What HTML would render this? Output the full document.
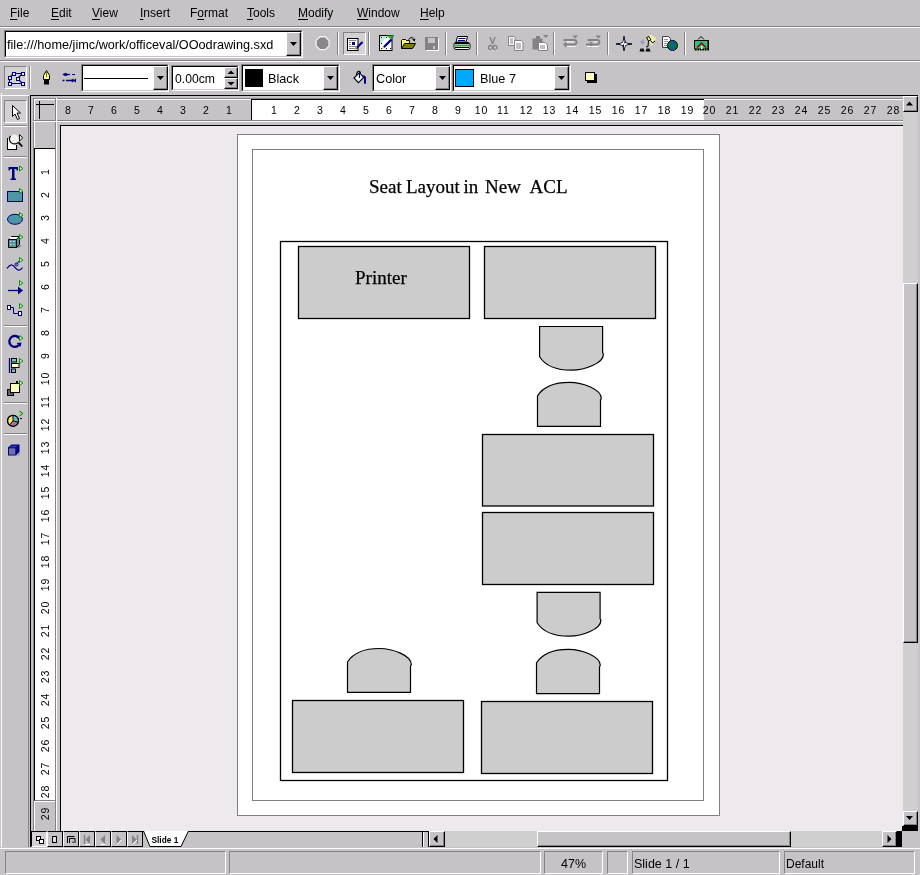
<!DOCTYPE html><html><head><meta charset="utf-8"><style>
*{margin:0;padding:0;box-sizing:border-box}
html,body{width:920px;height:875px;overflow:hidden;background:#c6c3c6;font-family:"Liberation Sans",sans-serif;font-size:12px;color:#000}
div,span,svg{position:absolute}
span{white-space:nowrap;line-height:1;filter:grayscale(1)}
u{text-decoration:underline;text-underline-offset:2px;text-decoration-thickness:1px}
.rl{font-size:11px;width:30px;text-align:center}
</style></head><body><span style="left:10px;top:7px;font-size:12px;"><u>F</u>ile</span>
<span style="left:51px;top:7px;font-size:12px;"><u>E</u>dit</span>
<span style="left:92px;top:7px;font-size:12px;"><u>V</u>iew</span>
<span style="left:140px;top:7px;font-size:12px;"><u>I</u>nsert</span>
<span style="left:190px;top:7px;font-size:12px;">F<u>o</u>rmat</span>
<span style="left:247px;top:7px;font-size:12px;"><u>T</u>ools</span>
<span style="left:298px;top:7px;font-size:12px;"><u>M</u>odify</span>
<span style="left:357px;top:7px;font-size:12px;"><u>W</u>indow</span>
<span style="left:420px;top:7px;font-size:12px;"><u>H</u>elp</span>
<div style="left:0px;top:26px;width:920px;height:1px;background:#848284"></div>
<div style="left:0px;top:27px;width:920px;height:1px;background:#fff"></div>
<div style="left:0px;top:60px;width:920px;height:1px;background:#848284"></div>
<div style="left:0px;top:61px;width:920px;height:1px;background:#fff"></div>
<div style="left:4px;top:30px;width:299px;height:28px;background:#fff;border-top:1px solid #848284;border-left:1px solid #848284;border-right:1px solid #fff;border-bottom:1px solid #fff"></div>
<div style="left:5px;top:31px;width:297px;height:26px;border-top:1px solid #000;border-left:1px solid #000;border-right:1px solid #c6c3c6;border-bottom:1px solid #c6c3c6"></div>
<span style="left:7px;top:39px;font-size:12.7px">file:///home/jimc/work/officeval/OOodrawing.sxd</span>
<div style="left:286px;top:32px;width:15px;height:24px;background:#c6c3c6;border-top:1px solid #fff;border-left:1px solid #fff;border-right:1px solid #000;border-bottom:1px solid #000"></div>
<div style="left:287px;top:33px;width:13px;height:22px;border-right:1px solid #848284;border-bottom:1px solid #848284"></div>
<svg style="left:290px;top:42px" width="7" height="4"><path d="M0 0H7L3.5 4Z" fill="#000"/></svg>
<div style="left:337px;top:32px;width:1px;height:23px;background:#848284"></div>
<div style="left:338px;top:32px;width:1px;height:23px;background:#fff"></div>
<div style="left:343px;top:32px;width:23px;height:23px;background:#d4d1d4;border-top:1px solid #848284;border-left:1px solid #848284;border-right:1px solid #fff;border-bottom:1px solid #fff"></div>
<div style="left:368px;top:32px;width:1px;height:23px;background:#848284"></div>
<div style="left:369px;top:32px;width:1px;height:23px;background:#fff"></div>
<div style="left:445px;top:32px;width:1px;height:23px;background:#848284"></div>
<div style="left:446px;top:32px;width:1px;height:23px;background:#fff"></div>
<div style="left:476px;top:32px;width:1px;height:23px;background:#848284"></div>
<div style="left:477px;top:32px;width:1px;height:23px;background:#fff"></div>
<div style="left:553px;top:32px;width:1px;height:23px;background:#848284"></div>
<div style="left:554px;top:32px;width:1px;height:23px;background:#fff"></div>
<div style="left:607px;top:32px;width:1px;height:23px;background:#848284"></div>
<div style="left:608px;top:32px;width:1px;height:23px;background:#fff"></div>
<div style="left:684px;top:32px;width:1px;height:23px;background:#848284"></div>
<div style="left:685px;top:32px;width:1px;height:23px;background:#fff"></div>
<div style="left:4px;top:66px;width:23px;height:23px;background:#d4d1d4;border-top:1px solid #848284;border-left:1px solid #848284;border-right:1px solid #fff;border-bottom:1px solid #fff"></div>
<div style="left:29px;top:66px;width:1px;height:23px;background:#848284"></div>
<div style="left:30px;top:66px;width:1px;height:23px;background:#fff"></div>
<div style="left:81px;top:64px;width:88px;height:28px;background:#fff;border-top:1px solid #848284;border-left:1px solid #848284;border-right:1px solid #fff;border-bottom:1px solid #fff"></div>
<div style="left:82px;top:65px;width:86px;height:26px;border-top:1px solid #000;border-left:1px solid #000;border-right:1px solid #c6c3c6;border-bottom:1px solid #c6c3c6"></div>
<div style="left:84px;top:78px;width:64px;height:1px;background:#000"></div>
<div style="left:153px;top:66px;width:15px;height:24px;background:#c6c3c6;border-top:1px solid #fff;border-left:1px solid #fff;border-right:1px solid #000;border-bottom:1px solid #000"></div>
<div style="left:154px;top:67px;width:13px;height:22px;border-right:1px solid #848284;border-bottom:1px solid #848284"></div>
<svg style="left:157px;top:76px" width="7" height="4"><path d="M0 0H7L3.5 4Z" fill="#000"/></svg>
<div style="left:171px;top:65px;width:68px;height:26px;background:#fff;border-top:1px solid #848284;border-left:1px solid #848284;border-right:1px solid #fff;border-bottom:1px solid #fff"></div>
<div style="left:172px;top:66px;width:66px;height:24px;border-top:1px solid #000;border-left:1px solid #000;border-right:1px solid #c6c3c6;border-bottom:1px solid #c6c3c6"></div>
<span style="left:175px;top:73px;font-size:12.2px">0.00cm</span>
<div style="left:224px;top:67px;width:14px;height:11px;background:#c6c3c6;border-top:1px solid #fff;border-left:1px solid #fff;border-right:1px solid #000;border-bottom:1px solid #000"></div>
<div style="left:225px;top:68px;width:12px;height:9px;border-right:1px solid #848284;border-bottom:1px solid #848284"></div>
<div style="left:224px;top:78px;width:14px;height:11px;background:#c6c3c6;border-top:1px solid #fff;border-left:1px solid #fff;border-right:1px solid #000;border-bottom:1px solid #000"></div>
<div style="left:225px;top:79px;width:12px;height:9px;border-right:1px solid #848284;border-bottom:1px solid #848284"></div>
<svg style="left:227px;top:70px" width="8" height="17"><path d="M0.5 4H7.5L4 0.5Z M0.5 12H7.5L4 15.5Z" fill="#000"/></svg>
<div style="left:241px;top:64px;width:99px;height:28px;background:#fff;border-top:1px solid #848284;border-left:1px solid #848284;border-right:1px solid #fff;border-bottom:1px solid #fff"></div>
<div style="left:242px;top:65px;width:97px;height:26px;border-top:1px solid #000;border-left:1px solid #000;border-right:1px solid #c6c3c6;border-bottom:1px solid #c6c3c6"></div>
<div style="left:245px;top:69px;width:18px;height:18px;background:#000"></div>
<span style="left:268px;top:73px;font-size:12.7px">Black</span>
<div style="left:323px;top:66px;width:15px;height:24px;background:#c6c3c6;border-top:1px solid #fff;border-left:1px solid #fff;border-right:1px solid #000;border-bottom:1px solid #000"></div>
<div style="left:324px;top:67px;width:13px;height:22px;border-right:1px solid #848284;border-bottom:1px solid #848284"></div>
<svg style="left:327px;top:76px" width="7" height="4"><path d="M0 0H7L3.5 4Z" fill="#000"/></svg>
<div style="left:372px;top:64px;width:79px;height:28px;background:#fff;border-top:1px solid #848284;border-left:1px solid #848284;border-right:1px solid #fff;border-bottom:1px solid #fff"></div>
<div style="left:373px;top:65px;width:77px;height:26px;border-top:1px solid #000;border-left:1px solid #000;border-right:1px solid #c6c3c6;border-bottom:1px solid #c6c3c6"></div>
<span style="left:376px;top:73px;font-size:12.7px">Color</span>
<div style="left:435px;top:66px;width:15px;height:24px;background:#c6c3c6;border-top:1px solid #fff;border-left:1px solid #fff;border-right:1px solid #000;border-bottom:1px solid #000"></div>
<div style="left:436px;top:67px;width:13px;height:22px;border-right:1px solid #848284;border-bottom:1px solid #848284"></div>
<svg style="left:439px;top:76px" width="7" height="4"><path d="M0 0H7L3.5 4Z" fill="#000"/></svg>
<div style="left:452px;top:64px;width:119px;height:28px;background:#fff;border-top:1px solid #848284;border-left:1px solid #848284;border-right:1px solid #fff;border-bottom:1px solid #fff"></div>
<div style="left:453px;top:65px;width:117px;height:26px;border-top:1px solid #000;border-left:1px solid #000;border-right:1px solid #c6c3c6;border-bottom:1px solid #c6c3c6"></div>
<div style="left:455px;top:69px;width:19px;height:18px;background:#000"></div>
<div style="left:456px;top:70px;width:17px;height:16px;background:#00a8ff"></div>
<span style="left:480px;top:73px;font-size:12.7px">Blue 7</span>
<div style="left:554px;top:66px;width:15px;height:24px;background:#c6c3c6;border-top:1px solid #fff;border-left:1px solid #fff;border-right:1px solid #000;border-bottom:1px solid #000"></div>
<div style="left:555px;top:67px;width:13px;height:22px;border-right:1px solid #848284;border-bottom:1px solid #848284"></div>
<svg style="left:558px;top:76px" width="7" height="4"><path d="M0 0H7L3.5 4Z" fill="#000"/></svg>
<div style="left:1px;top:93px;width:29px;height:754px;border-left:1px solid #fff"></div>
<div style="left:0px;top:95px;width:29px;height:1px;background:#fff"></div>
<div style="left:28px;top:96px;width:1px;height:751px;background:#848284"></div>
<div style="left:30px;top:95px;width:888px;height:1px;background:#000"></div>
<div style="left:30px;top:95px;width:1px;height:752px;background:#000"></div>
<div style="left:917px;top:95px;width:1px;height:736px;background:#000"></div>
<div style="left:4px;top:100px;width:23px;height:23px;background:#d4d1d4;border-top:1px solid #848284;border-left:1px solid #848284;border-right:1px solid #fff;border-bottom:1px solid #fff"></div>
<div style="left:4px;top:125px;width:23px;height:1px;background:#848284"></div>
<div style="left:4px;top:126px;width:23px;height:1px;background:#fff"></div>
<div style="left:4px;top:156px;width:23px;height:1px;background:#848284"></div>
<div style="left:4px;top:157px;width:23px;height:1px;background:#fff"></div>
<div style="left:4px;top:325px;width:23px;height:1px;background:#848284"></div>
<div style="left:4px;top:326px;width:23px;height:1px;background:#fff"></div>
<div style="left:4px;top:402px;width:23px;height:1px;background:#848284"></div>
<div style="left:4px;top:403px;width:23px;height:1px;background:#fff"></div>
<div style="left:4px;top:433px;width:23px;height:1px;background:#848284"></div>
<div style="left:4px;top:434px;width:23px;height:1px;background:#fff"></div>
<div style="left:33px;top:98px;width:23px;height:23px;border-top:1px solid #848284;border-left:1px solid #848284;border-right:1px solid #848284;border-bottom:1px solid #848284"></div>
<div style="left:34px;top:99px;width:21px;height:21px;border-top:1px solid #fff;border-left:1px solid #fff"></div>
<svg style="left:33px;top:98px" width="24" height="23"><path d="M6.5 3V21M3 6.5H21" stroke="#000" stroke-width="1"/></svg>
<div style="left:57px;top:98px;width:846px;height:23px;border-top:1px solid #848284;border-bottom:1px solid #848284"></div>
<div style="left:57px;top:99px;width:846px;height:1px;background:#fff"></div>
<div style="left:251px;top:99px;width:453px;height:21px;background:#fff;border-left:1px solid #000;border-top:1px solid #000"></div>
<span style="left:53px;top:103.5px;width:30px;text-align:center;font-size:11.7px;letter-spacing:1.1px;padding-left:1.1px;transform:scaleX(0.9)">8</span>
<span style="left:76px;top:103.5px;width:30px;text-align:center;font-size:11.7px;letter-spacing:1.1px;padding-left:1.1px;transform:scaleX(0.9)">7</span>
<span style="left:99px;top:103.5px;width:30px;text-align:center;font-size:11.7px;letter-spacing:1.1px;padding-left:1.1px;transform:scaleX(0.9)">6</span>
<span style="left:122px;top:103.5px;width:30px;text-align:center;font-size:11.7px;letter-spacing:1.1px;padding-left:1.1px;transform:scaleX(0.9)">5</span>
<span style="left:145px;top:103.5px;width:30px;text-align:center;font-size:11.7px;letter-spacing:1.1px;padding-left:1.1px;transform:scaleX(0.9)">4</span>
<span style="left:168px;top:103.5px;width:30px;text-align:center;font-size:11.7px;letter-spacing:1.1px;padding-left:1.1px;transform:scaleX(0.9)">3</span>
<span style="left:191px;top:103.5px;width:30px;text-align:center;font-size:11.7px;letter-spacing:1.1px;padding-left:1.1px;transform:scaleX(0.9)">2</span>
<span style="left:214px;top:103.5px;width:30px;text-align:center;font-size:11.7px;letter-spacing:1.1px;padding-left:1.1px;transform:scaleX(0.9)">1</span>
<span style="left:259px;top:103.5px;width:30px;text-align:center;font-size:11.7px;letter-spacing:1.1px;padding-left:1.1px;transform:scaleX(0.9)">1</span>
<span style="left:282px;top:103.5px;width:30px;text-align:center;font-size:11.7px;letter-spacing:1.1px;padding-left:1.1px;transform:scaleX(0.9)">2</span>
<span style="left:305px;top:103.5px;width:30px;text-align:center;font-size:11.7px;letter-spacing:1.1px;padding-left:1.1px;transform:scaleX(0.9)">3</span>
<span style="left:328px;top:103.5px;width:30px;text-align:center;font-size:11.7px;letter-spacing:1.1px;padding-left:1.1px;transform:scaleX(0.9)">4</span>
<span style="left:351px;top:103.5px;width:30px;text-align:center;font-size:11.7px;letter-spacing:1.1px;padding-left:1.1px;transform:scaleX(0.9)">5</span>
<span style="left:374px;top:103.5px;width:30px;text-align:center;font-size:11.7px;letter-spacing:1.1px;padding-left:1.1px;transform:scaleX(0.9)">6</span>
<span style="left:397px;top:103.5px;width:30px;text-align:center;font-size:11.7px;letter-spacing:1.1px;padding-left:1.1px;transform:scaleX(0.9)">7</span>
<span style="left:420px;top:103.5px;width:30px;text-align:center;font-size:11.7px;letter-spacing:1.1px;padding-left:1.1px;transform:scaleX(0.9)">8</span>
<span style="left:443px;top:103.5px;width:30px;text-align:center;font-size:11.7px;letter-spacing:1.1px;padding-left:1.1px;transform:scaleX(0.9)">9</span>
<span style="left:466px;top:103.5px;width:30px;text-align:center;font-size:11.7px;letter-spacing:1.1px;padding-left:1.1px;transform:scaleX(0.9)">10</span>
<span style="left:488px;top:103.5px;width:30px;text-align:center;font-size:11.7px;letter-spacing:1.1px;padding-left:1.1px;transform:scaleX(0.9)">11</span>
<span style="left:511px;top:103.5px;width:30px;text-align:center;font-size:11.7px;letter-spacing:1.1px;padding-left:1.1px;transform:scaleX(0.9)">12</span>
<span style="left:534px;top:103.5px;width:30px;text-align:center;font-size:11.7px;letter-spacing:1.1px;padding-left:1.1px;transform:scaleX(0.9)">13</span>
<span style="left:557px;top:103.5px;width:30px;text-align:center;font-size:11.7px;letter-spacing:1.1px;padding-left:1.1px;transform:scaleX(0.9)">14</span>
<span style="left:580px;top:103.5px;width:30px;text-align:center;font-size:11.7px;letter-spacing:1.1px;padding-left:1.1px;transform:scaleX(0.9)">15</span>
<span style="left:603px;top:103.5px;width:30px;text-align:center;font-size:11.7px;letter-spacing:1.1px;padding-left:1.1px;transform:scaleX(0.9)">16</span>
<span style="left:626px;top:103.5px;width:30px;text-align:center;font-size:11.7px;letter-spacing:1.1px;padding-left:1.1px;transform:scaleX(0.9)">17</span>
<span style="left:649px;top:103.5px;width:30px;text-align:center;font-size:11.7px;letter-spacing:1.1px;padding-left:1.1px;transform:scaleX(0.9)">18</span>
<span style="left:672px;top:103.5px;width:30px;text-align:center;font-size:11.7px;letter-spacing:1.1px;padding-left:1.1px;transform:scaleX(0.9)">19</span>
<span style="left:694px;top:103.5px;width:30px;text-align:center;font-size:11.7px;letter-spacing:1.1px;padding-left:1.1px;transform:scaleX(0.9)">20</span>
<span style="left:717px;top:103.5px;width:30px;text-align:center;font-size:11.7px;letter-spacing:1.1px;padding-left:1.1px;transform:scaleX(0.9)">21</span>
<span style="left:740px;top:103.5px;width:30px;text-align:center;font-size:11.7px;letter-spacing:1.1px;padding-left:1.1px;transform:scaleX(0.9)">22</span>
<span style="left:763px;top:103.5px;width:30px;text-align:center;font-size:11.7px;letter-spacing:1.1px;padding-left:1.1px;transform:scaleX(0.9)">23</span>
<span style="left:786px;top:103.5px;width:30px;text-align:center;font-size:11.7px;letter-spacing:1.1px;padding-left:1.1px;transform:scaleX(0.9)">24</span>
<span style="left:809px;top:103.5px;width:30px;text-align:center;font-size:11.7px;letter-spacing:1.1px;padding-left:1.1px;transform:scaleX(0.9)">25</span>
<span style="left:832px;top:103.5px;width:30px;text-align:center;font-size:11.7px;letter-spacing:1.1px;padding-left:1.1px;transform:scaleX(0.9)">26</span>
<span style="left:855px;top:103.5px;width:30px;text-align:center;font-size:11.7px;letter-spacing:1.1px;padding-left:1.1px;transform:scaleX(0.9)">27</span>
<span style="left:878px;top:103.5px;width:30px;text-align:center;font-size:11.7px;letter-spacing:1.1px;padding-left:1.1px;transform:scaleX(0.9)">28</span>
<div style="left:33px;top:121px;width:870px;height:1px;background:#fff"></div>
<div style="left:56px;top:98px;width:1px;height:733px;background:#fff"></div>
<div style="left:60px;top:125px;width:843px;height:706px;background:#eee9ec;border-left:1px solid #000;border-top:1px solid #000"></div>
<div style="left:33px;top:122px;width:1px;height:709px;background:#848284"></div>
<div style="left:34px;top:122px;width:1px;height:709px;background:#fff"></div>
<div style="left:55px;top:122px;width:1px;height:709px;background:#848284"></div>
<div style="left:34px;top:148px;width:21px;height:653px;background:#fff;border-top:1px solid #000;border-left:1px solid #000;border-bottom:1px solid #848284"></div>
<div style="left:34px;top:801px;width:21px;height:1px;background:#fff"></div>
<span style="left:30px;top:166px;width:30px;height:12px;text-align:center;font-size:11.7px;letter-spacing:1.1px;padding-left:1.1px;transform:rotate(-90deg) scaleX(0.9)">1</span>
<span style="left:30px;top:189px;width:30px;height:12px;text-align:center;font-size:11.7px;letter-spacing:1.1px;padding-left:1.1px;transform:rotate(-90deg) scaleX(0.9)">2</span>
<span style="left:30px;top:212px;width:30px;height:12px;text-align:center;font-size:11.7px;letter-spacing:1.1px;padding-left:1.1px;transform:rotate(-90deg) scaleX(0.9)">3</span>
<span style="left:30px;top:235px;width:30px;height:12px;text-align:center;font-size:11.7px;letter-spacing:1.1px;padding-left:1.1px;transform:rotate(-90deg) scaleX(0.9)">4</span>
<span style="left:30px;top:258px;width:30px;height:12px;text-align:center;font-size:11.7px;letter-spacing:1.1px;padding-left:1.1px;transform:rotate(-90deg) scaleX(0.9)">5</span>
<span style="left:30px;top:281px;width:30px;height:12px;text-align:center;font-size:11.7px;letter-spacing:1.1px;padding-left:1.1px;transform:rotate(-90deg) scaleX(0.9)">6</span>
<span style="left:30px;top:304px;width:30px;height:12px;text-align:center;font-size:11.7px;letter-spacing:1.1px;padding-left:1.1px;transform:rotate(-90deg) scaleX(0.9)">7</span>
<span style="left:30px;top:327px;width:30px;height:12px;text-align:center;font-size:11.7px;letter-spacing:1.1px;padding-left:1.1px;transform:rotate(-90deg) scaleX(0.9)">8</span>
<span style="left:30px;top:350px;width:30px;height:12px;text-align:center;font-size:11.7px;letter-spacing:1.1px;padding-left:1.1px;transform:rotate(-90deg) scaleX(0.9)">9</span>
<span style="left:30px;top:373px;width:30px;height:12px;text-align:center;font-size:11.7px;letter-spacing:1.1px;padding-left:1.1px;transform:rotate(-90deg) scaleX(0.9)">10</span>
<span style="left:30px;top:396px;width:30px;height:12px;text-align:center;font-size:11.7px;letter-spacing:1.1px;padding-left:1.1px;transform:rotate(-90deg) scaleX(0.9)">11</span>
<span style="left:30px;top:419px;width:30px;height:12px;text-align:center;font-size:11.7px;letter-spacing:1.1px;padding-left:1.1px;transform:rotate(-90deg) scaleX(0.9)">12</span>
<span style="left:30px;top:442px;width:30px;height:12px;text-align:center;font-size:11.7px;letter-spacing:1.1px;padding-left:1.1px;transform:rotate(-90deg) scaleX(0.9)">13</span>
<span style="left:30px;top:465px;width:30px;height:12px;text-align:center;font-size:11.7px;letter-spacing:1.1px;padding-left:1.1px;transform:rotate(-90deg) scaleX(0.9)">14</span>
<span style="left:30px;top:487px;width:30px;height:12px;text-align:center;font-size:11.7px;letter-spacing:1.1px;padding-left:1.1px;transform:rotate(-90deg) scaleX(0.9)">15</span>
<span style="left:30px;top:510px;width:30px;height:12px;text-align:center;font-size:11.7px;letter-spacing:1.1px;padding-left:1.1px;transform:rotate(-90deg) scaleX(0.9)">16</span>
<span style="left:30px;top:533px;width:30px;height:12px;text-align:center;font-size:11.7px;letter-spacing:1.1px;padding-left:1.1px;transform:rotate(-90deg) scaleX(0.9)">17</span>
<span style="left:30px;top:556px;width:30px;height:12px;text-align:center;font-size:11.7px;letter-spacing:1.1px;padding-left:1.1px;transform:rotate(-90deg) scaleX(0.9)">18</span>
<span style="left:30px;top:579px;width:30px;height:12px;text-align:center;font-size:11.7px;letter-spacing:1.1px;padding-left:1.1px;transform:rotate(-90deg) scaleX(0.9)">19</span>
<span style="left:30px;top:602px;width:30px;height:12px;text-align:center;font-size:11.7px;letter-spacing:1.1px;padding-left:1.1px;transform:rotate(-90deg) scaleX(0.9)">20</span>
<span style="left:30px;top:625px;width:30px;height:12px;text-align:center;font-size:11.7px;letter-spacing:1.1px;padding-left:1.1px;transform:rotate(-90deg) scaleX(0.9)">21</span>
<span style="left:30px;top:648px;width:30px;height:12px;text-align:center;font-size:11.7px;letter-spacing:1.1px;padding-left:1.1px;transform:rotate(-90deg) scaleX(0.9)">22</span>
<span style="left:30px;top:671px;width:30px;height:12px;text-align:center;font-size:11.7px;letter-spacing:1.1px;padding-left:1.1px;transform:rotate(-90deg) scaleX(0.9)">23</span>
<span style="left:30px;top:694px;width:30px;height:12px;text-align:center;font-size:11.7px;letter-spacing:1.1px;padding-left:1.1px;transform:rotate(-90deg) scaleX(0.9)">24</span>
<span style="left:30px;top:717px;width:30px;height:12px;text-align:center;font-size:11.7px;letter-spacing:1.1px;padding-left:1.1px;transform:rotate(-90deg) scaleX(0.9)">25</span>
<span style="left:30px;top:740px;width:30px;height:12px;text-align:center;font-size:11.7px;letter-spacing:1.1px;padding-left:1.1px;transform:rotate(-90deg) scaleX(0.9)">26</span>
<span style="left:30px;top:763px;width:30px;height:12px;text-align:center;font-size:11.7px;letter-spacing:1.1px;padding-left:1.1px;transform:rotate(-90deg) scaleX(0.9)">27</span>
<span style="left:30px;top:786px;width:30px;height:12px;text-align:center;font-size:11.7px;letter-spacing:1.1px;padding-left:1.1px;transform:rotate(-90deg) scaleX(0.9)">28</span>
<span style="left:30px;top:808px;width:30px;height:12px;text-align:center;font-size:11.7px;letter-spacing:1.1px;padding-left:1.1px;transform:rotate(-90deg) scaleX(0.9)">29</span>
<div style="left:237px;top:134px;width:483px;height:682px;background:#fff;border:1px solid #808080"></div>
<div style="left:252px;top:149px;width:452px;height:652px;border:1px solid #808080"></div>
<div style="left:903px;top:96px;width:15px;height:730px;background:#d0cfd0"></div>
<div style="left:903px;top:96px;width:15px;height:16px;background:#c6c3c6;border-top:1px solid #fff;border-left:1px solid #fff;border-right:1px solid #000;border-bottom:1px solid #000"></div>
<div style="left:904px;top:97px;width:13px;height:14px;border-right:1px solid #848284;border-bottom:1px solid #848284"></div>
<svg style="left:906px;top:100.5px" width="7" height="5"><path d="M0 4.5H7L3.5 0.5Z" fill="#000"/></svg>
<div style="left:903px;top:283px;width:15px;height:360px;background:#c6c3c6;border-top:1px solid #fff;border-left:1px solid #fff;border-right:1px solid #000;border-bottom:1px solid #000"></div>
<div style="left:904px;top:284px;width:13px;height:358px;border-right:1px solid #848284;border-bottom:1px solid #848284"></div>
<div style="left:903px;top:811px;width:15px;height:15px;background:#c6c3c6;border-top:1px solid #fff;border-left:1px solid #fff;border-right:1px solid #000;border-bottom:1px solid #000"></div>
<div style="left:904px;top:812px;width:13px;height:13px;border-right:1px solid #848284;border-bottom:1px solid #848284"></div>
<svg style="left:906px;top:816px" width="7" height="4"><path d="M0 0H7L3.5 4Z" fill="#000"/></svg>
<div style="left:31px;top:831px;width:871px;height:16px;background:#c6c3c6;border-top:1px solid #000"></div>
<div style="left:31px;top:831px;width:16px;height:16px;background:#d4d1d4;border-top:1px solid #000;border-left:1px solid #000;border-right:1px solid #fff;border-bottom:1px solid #fff"></div>
<div style="left:47px;top:831px;width:16px;height:16px;background:#c6c3c6;border-top:1px solid #000;border-left:1px solid #fff;border-right:1px solid #000;border-bottom:1px solid #000"></div>
<div style="left:63px;top:831px;width:16px;height:16px;background:#c6c3c6;border-top:1px solid #000;border-left:1px solid #fff;border-right:1px solid #000;border-bottom:1px solid #000"></div>
<div style="left:79px;top:831px;width:16px;height:16px;background:#c6c3c6;border-top:1px solid #000;border-left:1px solid #fff;border-right:1px solid #000;border-bottom:1px solid #000"></div>
<div style="left:95px;top:831px;width:16px;height:16px;background:#c6c3c6;border-top:1px solid #000;border-left:1px solid #fff;border-right:1px solid #000;border-bottom:1px solid #000"></div>
<div style="left:111px;top:831px;width:16px;height:16px;background:#c6c3c6;border-top:1px solid #000;border-left:1px solid #fff;border-right:1px solid #000;border-bottom:1px solid #000"></div>
<div style="left:127px;top:831px;width:16px;height:16px;background:#c6c3c6;border-top:1px solid #000;border-left:1px solid #fff;border-right:1px solid #000;border-bottom:1px solid #000"></div>
<svg style="left:0;top:0" width="920" height="875"><rect x="36.5" y="836.5" width="4" height="4" fill="#fff" stroke="#000"/><rect x="39.5" y="839.5" width="4" height="4" fill="#fff" stroke="#000"/><rect x="52.5" y="836.5" width="4" height="6" fill="#ddd" stroke="#000"/><path d="M67.5 843V836.5H74.5M69.5 843V838.5H75V843M73 841.5V843" fill="none" stroke="#000"/><path d="M84.5 835V844" stroke="#858285" stroke-width="1.5"/><path d="M90 835L85.5 839.5L90 844Z" fill="#858285"/><path d="M85.5 844.5H90" stroke="#fff"/><path d="M105 835L100.5 839.5L105 844Z" fill="#858285"/><path d="M101 844.5H105" stroke="#fff"/><path d="M116.5 835L121 839.5L116.5 844Z" fill="#858285"/><path d="M117 844.5L121.5 840" stroke="#fff"/><path d="M132 835L136.5 839.5L132 844Z" fill="#858285"/><path d="M137.5 835V844" stroke="#858285" stroke-width="1.5"/><path d="M132.5 844.5L137 840" stroke="#fff"/></svg>
<svg style="left:140px;top:831px" width="52" height="16"><path d="M3.5 0L10 15.5H41L48.5 0" fill="#fff" stroke="#000"/></svg>
<span style="left:151.5px;top:836px;font-size:8.3px;font-weight:bold">Slide 1</span>
<div style="left:191px;top:831px;width:232px;height:1px;background:#000"></div>
<div style="left:422px;top:831px;width:1px;height:16px;background:#000"></div>
<div style="left:423px;top:832px;width:5px;height:15px;border-left:1px solid #fff"></div>
<div style="left:428px;top:831px;width:1px;height:16px;background:#000"></div>
<div style="left:445px;top:831px;width:452px;height:16px;background:#d0cfd0"></div>
<div style="left:429px;top:831px;width:16px;height:16px;background:#c6c3c6;border-top:1px solid #fff;border-left:1px solid #fff;border-right:1px solid #000;border-bottom:1px solid #000"></div>
<div style="left:430px;top:832px;width:14px;height:14px;border-right:1px solid #848284;border-bottom:1px solid #848284"></div>
<div style="left:537px;top:831px;width:254px;height:16px;background:#c6c3c6;border-top:1px solid #fff;border-left:1px solid #fff;border-right:1px solid #000;border-bottom:1px solid #000"></div>
<div style="left:538px;top:832px;width:252px;height:14px;border-right:1px solid #848284;border-bottom:1px solid #848284"></div>
<div style="left:882px;top:831px;width:15px;height:16px;background:#c6c3c6;border-top:1px solid #fff;border-left:1px solid #fff;border-right:1px solid #000;border-bottom:1px solid #000"></div>
<div style="left:883px;top:832px;width:13px;height:14px;border-right:1px solid #848284;border-bottom:1px solid #848284"></div>
<svg style="left:887px;top:835px" width="5" height="8"><path d="M0.5 0V8L4.5 4Z" fill="#000"/></svg>
<svg style="left:433px;top:835px" width="5" height="8"><path d="M4.5 0V8L0.5 4Z" fill="#000"/></svg>
<div style="left:897px;top:831px;width:5px;height:16px;background:#000"></div>
<div style="left:902px;top:826px;width:16px;height:5px;background:#000"></div>
<div style="left:0px;top:848px;width:920px;height:1px;background:#fff"></div>
<div style="left:5px;top:851px;width:221px;height:23px;border-top:1px solid #848284;border-left:1px solid #848284;border-right:1px solid #fff;border-bottom:1px solid #fff"></div>
<div style="left:229px;top:851px;width:312px;height:23px;border-top:1px solid #848284;border-left:1px solid #848284;border-right:1px solid #fff;border-bottom:1px solid #fff"></div>
<div style="left:544px;top:851px;width:59px;height:23px;border-top:1px solid #848284;border-left:1px solid #848284;border-right:1px solid #fff;border-bottom:1px solid #fff"></div>
<div style="left:607px;top:851px;width:21px;height:23px;border-top:1px solid #848284;border-left:1px solid #848284;border-right:1px solid #fff;border-bottom:1px solid #fff"></div>
<div style="left:632px;top:851px;width:148px;height:23px;border-top:1px solid #848284;border-left:1px solid #848284;border-right:1px solid #fff;border-bottom:1px solid #fff"></div>
<div style="left:784px;top:851px;width:131px;height:23px;border-top:1px solid #848284;border-left:1px solid #848284;border-right:1px solid #fff;border-bottom:1px solid #fff"></div>
<span style="left:561px;top:858px;font-size:12.5px">47%</span>
<span style="left:634px;top:858px;font-size:12.5px">Slide 1 / 1</span>
<span style="left:786px;top:858px;font-size:12px">Default</span>
<svg style="left:0;top:0" width="920" height="875"><g fill="#ccc" stroke="#000" stroke-width="1.3"><rect x="280.5" y="241.5" width="387" height="539" fill="none"/><rect x="298.5" y="246.5" width="171.0" height="72.0"/><rect x="484.5" y="246.5" width="171.0" height="72.0"/><rect x="482.5" y="434.5" width="171.0" height="71.5"/><rect x="482.5" y="512.5" width="171.0" height="72.0"/><rect x="292.5" y="700.5" width="171.0" height="72.0"/><rect x="481.5" y="701.5" width="171.0" height="72.0"/></g><g fill="#ccc" stroke="#000" stroke-width="1.2"><path transform="translate(539.6 326.5)" d="M0 0H63V26.20L63.8 27.70C63.8 36.70 45.4 43.69999999999999 32 43.69999999999999C19 43.69999999999999 6.1 39.80 0 30.20Z"/><path transform="translate(537.5 426.3) scale(1 -1)" d="M0 0H63V26.40L63.8 27.90C63.8 36.90 45.4 43.900000000000034 32 43.900000000000034C19 43.900000000000034 6.1 40.00 0 30.40Z"/><path transform="translate(537.1 592.3)" d="M0 0H63V26.40L63.8 27.90C63.8 36.90 45.4 43.90000000000009 32 43.90000000000009C19 43.90000000000009 6.1 40.00 0 30.40Z"/><path transform="translate(536.5 693.6) scale(1 -1)" d="M0 0H63V26.80L63.8 28.30C63.8 37.30 45.4 44.30000000000007 32 44.30000000000007C19 44.30000000000007 6.1 40.40 0 30.80Z"/><path transform="translate(347.5 692.4) scale(1 -1)" d="M0 0H63V26.40L63.8 27.90C63.8 36.90 45.4 43.89999999999998 32 43.89999999999998C19 43.89999999999998 6.1 40.00 0 30.40Z"/></g><path d="M12.5 105.5V116.5L15 114L17.5 119.5L19.5 118.5L17 113H20.5Z" fill="#fff" stroke="#000" stroke-width="1"/><path d="M8 138.5H7.5V149.5H16.5V145" fill="#fff" stroke="#000" stroke-width="1.1"/><rect x="8" y="139" width="8" height="10" fill="#fff"/><circle cx="14.3" cy="139.2" r="4.6" fill="#f4f4f0"/><path d="M10.5 135.8A4.6 4.6 0 0 0 18.5 142" fill="none" stroke="#000" stroke-width="1.2"/><path d="M18.5 142.3L22.3 146.5" stroke="#000" stroke-width="1.8"/><path d="M19.5 134.5L22.8 137.8L19.5 141Z" fill="#d8f0d0" stroke="#000" stroke-width="0.9"/><path d="M8.5 167H18V170.5H16.8L16.2 169H14.5V178.5H16V180H10.5V178.5H12V169H10.3L9.7 170.5H8.5Z" fill="#000080"/><path d="M19.5 166.0L23 168.5L19.5 171.0Z" fill="#c0f0b0" stroke="#109010" stroke-width="1"/><rect x="7.5" y="191.5" width="15" height="10" fill="#4f96a4" stroke="#000080"/><path d="M19.5 188.5L23 191L19.5 193.5Z" fill="#c0f0b0" stroke="#109010" stroke-width="1"/><ellipse cx="15" cy="219.3" rx="7.5" ry="5" fill="#4f96a4" stroke="#000080"/><path d="M19.5 212.5L23 215L19.5 217.5Z" fill="#c0f0b0" stroke="#109010" stroke-width="1"/><path d="M8.5 239.5L11.5 236.5H19.5V244.5L16.5 247.5H8.5Z" fill="#4f96a4" stroke="#000"/><path d="M8.5 239.5H16.5L19.5 236.5M16.5 239.5V247.5" fill="none" stroke="#000"/><path d="M9 240H16V247H9Z" fill="#5a9098"/><path d="M10 241.5h1.5M13 241.5h1.5M10 244.5h1.5M13 244.5h1.5" stroke="#c0e0e0"/><path d="M9.5 236.8L11.8 237H18.5L16.2 239H9.5Z" fill="#fff"/><path d="M17 248L20 245H22L19 248Z" fill="#888"/><path d="M19.5 234.5L23 237L19.5 239.5Z" fill="#c0f0b0" stroke="#109010" stroke-width="1"/><path d="M7 268.5C9 266 10 264.5 12 265C14 265.5 15 268 17 269.5C19 270.5 21 270 22.5 267.5" fill="none" stroke="#000080" stroke-width="1.2"/><circle cx="16.5" cy="264.5" r="1.5" fill="none" stroke="#000080"/><path d="M16.5 264.5L19 261" stroke="#000080"/><path d="M19.5 257.5L23 260L19.5 262.5Z" fill="#c0f0b0" stroke="#109010" stroke-width="1"/><path d="M8 290.5H19" stroke="#000080" stroke-width="1.3"/><path d="M18 286.5L23 290.5L18 294.5Z" fill="#000080"/><path d="M19.5 280.5L23 283L19.5 285.5Z" fill="#c0f0b0" stroke="#109010" stroke-width="1"/><path d="M10 307.5H13.5V313.5H18" fill="none" stroke="#000080"/><rect x="7.5" y="305.5" width="3" height="4" fill="#fff" stroke="#000080"/><rect x="18.5" y="311.5" width="3" height="4" fill="#fff" stroke="#000080"/><path d="M19.5 303.5L23 306L19.5 308.5Z" fill="#c0f0b0" stroke="#109010" stroke-width="1"/><path d="M19.5 338.5A5.5 5.5 0 1 0 19 345" fill="none" stroke="#000080" stroke-width="2.3"/><path d="M16.5 343L21.5 342.5L20.5 347Z" fill="#000080"/><path d="M19.5 335.5L23 338L19.5 340.5Z" fill="#c0f0b0" stroke="#109010" stroke-width="1"/><path d="M9.5 358V373" stroke="#000080" stroke-width="1.3"/><rect x="11.5" y="358.5" width="5" height="3.5" fill="#6fc6d0" stroke="#000"/><rect x="11.5" y="363.5" width="7.5" height="4" fill="#ffffc0" stroke="#000"/><rect x="11.5" y="369" width="4" height="3.5" fill="#6fc6d0" stroke="#000"/><path d="M19.5 358.5L23 361L19.5 363.5Z" fill="#c0f0b0" stroke="#109010" stroke-width="1"/><rect x="7.5" y="389.5" width="6" height="6" fill="#606060" stroke="#000"/><rect x="10.5" y="383.5" width="9" height="9" fill="#ffffc0" stroke="#000"/><rect x="16" y="381" width="2" height="3" fill="#000"/><path d="M19.5 380.5L23 383L19.5 385.5Z" fill="#c0f0b0" stroke="#109010" stroke-width="1"/><circle cx="13" cy="420.8" r="5.5" fill="#ffe870" stroke="#000" stroke-width="1.2"/><path d="M13 420.8V415.3A5.5 5.5 0 0 1 18.3 422.3Z" fill="#60c0c0"/><path d="M13 420.8L18.3 422.3A5.5 5.5 0 0 1 9.5 425Z" fill="#b070a0"/><circle cx="13" cy="420.8" r="5.5" fill="none" stroke="#000" stroke-width="1.2"/><path d="M13 420.8V415.3M13 420.8L18.3 422.3M13 420.8L9.5 425" stroke="#000"/><path d="M19.5 411L23 413.5L19.5 416" fill="#80e080" stroke="#008000"/><path d="M20 418.5H22" stroke="#000"/><path d="M8 447.5L11.5 444.5H19.5V452L16 455.5H8Z" fill="#000080"/><rect x="9" y="448.3" width="6.3" height="6.3" fill="#7070b0"/><path d="M9.5 447.5L12 445.5H18L15.5 447.5Z" fill="#3030c0"/><path d="M17 456L20.5 452.5V454L18.5 456.3Z" fill="#a0a0b0"/><polygon points="329.07,45.88 325.28,49.67 319.92,49.67 316.13,45.88 316.13,40.52 319.92,36.73 325.28,36.73 329.07,40.52" fill="#8a878a" stroke="#f4f4f4" stroke-width="1.3"/><rect x="347.5" y="38.5" width="10.5" height="12" fill="#fff" stroke="#000"/><path d="M349 40.5H356M349 42.5H351M349 44.5H351M349 46.5H356M349 48.5H356" stroke="#808080"/><rect x="352" y="42" width="3" height="3" fill="#000080"/><path d="M356 48.5L362.5 42" stroke="#000080" stroke-width="2.2"/><path d="M354.5 49.5L356.5 47" stroke="#c0c040" stroke-width="1.5"/><rect x="379.5" y="35.5" width="12.5" height="15" fill="#fff" stroke="#000"/><path d="M380 36H388L380 44Z" fill="#a0e8c8" opacity="0.7"/><path d="M381 37.5h1M386 37.5h1M381 43.5h1M381 48.5h1M386 48.5h1M390 48.5h1" stroke="#000"/><path d="M383.5 47.5L391.5 39.5" stroke="#000080" stroke-width="2.4"/><path d="M382.5 48.8L384 46.8" stroke="#e0e040" stroke-width="1.6"/><path d="M387 35.5H394L390.5 38.5Z" fill="#20c020" stroke="#006000" stroke-width="0.6"/><path d="M401.5 48.5V40.5L402.5 39.5H405.5L406.5 40.5H409.5V43.5" fill="#ffff80" stroke="#000"/><rect x="402" y="41" width="7" height="3" fill="#ffff80"/><path d="M401.5 48.5L404.5 43.5H415.5L412.5 48.5Z" fill="#808000" stroke="#000"/><path d="M408.5 39.5Q410.5 36.5 413.5 38" fill="none" stroke="#000"/><path d="M412 39.5L415.5 38.5L414.5 41.5Z" fill="#000"/><path d="M426.5 38.5H438.5V50.5H426.5Z" fill="none" stroke="#fff"/><rect x="425" y="37" width="13" height="13" fill="#858285"/><rect x="428" y="38" width="7" height="5" fill="#c8c4c8"/><rect x="433" y="46" width="2" height="3" fill="#c8c4c8"/><path d="M457.5 36.5H467.5L466 42H456Z" fill="#fff" stroke="#000"/><path d="M458.5 38.5H465.5M458 40.5H465" stroke="#000080"/><path d="M455.5 42.5H468.5Q470 43 470 45V47.5Q470 49.5 468 49.5H456Q454 49.5 454 47.5V44.5Q454 42.5 455.5 42.5Z" fill="#fff" stroke="#000"/><rect x="455" y="44.5" width="14" height="2" fill="#40a040"/><path d="M455 43.5H469M455 47.5H469" stroke="#000"/><path d="M490 37L492.5 44M495 37L492.5 44" stroke="#858285" stroke-width="1.4"/><circle cx="490.5" cy="47.5" r="2" fill="none" stroke="#858285" stroke-width="1.3"/><circle cx="495" cy="47.5" r="2" fill="none" stroke="#858285" stroke-width="1.3"/><path d="M491.5 49.5l1 1M496 49.5l1 1" stroke="#fff"/><path d="M508.5 36.5H514L515 37.5V45.5H508.5Z" fill="#fff" stroke="#858285"/><path d="M514.5 40.5H521L523 42.5V50.5H514.5Z" fill="#fff" stroke="#858285"/><path d="M510 39h3M510 41h3M510 43h3M516 44h5M516 46h5M516 48h5" stroke="#858285"/><path d="M532.5 38.5H542.5V49.5H532.5Z" fill="#858285"/><path d="M536 36H540V39H536Z" fill="#858285"/><path d="M538.5 42.5H545L547.5 45V50.5H538.5Z" fill="#fff" stroke="#858285"/><path d="M540 46h5M540 48h5" stroke="#858285"/><path d="M543 35H548.5L545.8 38Z" fill="#858285"/><path d="M563.5 40H574Q576.5 40 576.5 42.3Q576.5 44.5 574 44.5H566" fill="none" stroke="#858285" stroke-width="1.8"/><path d="M563 44.5L566.5 41V48Z" fill="#858285"/><path d="M567 46.5H575.5M566 41.8H574" stroke="#fff" stroke-width="0.9"/><path d="M572.5 35.5H578L575.3 38.5Z" fill="#858285"/><path d="M587.5 40H597Q599.5 40 599.5 42.3Q599.5 44.5 597 44.5H586" fill="none" stroke="#858285" stroke-width="1.8"/><path d="M593.5 44.5L590 41V48Z" fill="#858285"/><path d="M587 46.5H598.5M594 41.8H597" stroke="#fff" stroke-width="0.9"/><path d="M595.5 35.5H601L598.3 38.5Z" fill="#858285"/><path d="M624 36V51M616 44H632" stroke="#000" stroke-width="1.3"/><path d="M624 38L625.5 42.5L630 44L625.5 45.5L624 50L622.5 45.5L618 44L622.5 42.5Z" fill="#fff" stroke="#000" stroke-width="0.8"/><path d="M624 44L625 39.5L625.5 42.5ZM624 44L622.5 45.5L624 49Z" fill="#000080"/><path d="M642.5 39L645 42L642.5 45L640 42Z" fill="#a0a0b0"/><path d="M646 37L651 35L656 38L652 46Z" fill="#ffffa0" opacity="0.8"/><path d="M646.5 37.5L649 36.5L651 40L648.5 41ZM648.5 41L648 46.5L646 47M651 41L652.5 43L655 41" fill="none" stroke="#000"/><path d="M639.5 51.5L640.5 48.5H643.5L644.5 51.5ZM645.5 51.5L646.5 48.5H649.5L650.5 51.5Z" fill="#000"/><path d="M641.5 49h1M647.5 49h1" stroke="#608080"/><path d="M662.5 36.5H668.5L670.5 38.5V47.5H662.5Z" fill="#fff" stroke="#404040"/><path d="M664 39.5h4M664 41.5h4M664 43.5h3M664 45.5h3" stroke="#9090c0"/><circle cx="672.5" cy="45.5" r="5" fill="#008020" stroke="#000" stroke-width="1"/><path d="M671 41.5Q674 43 672 46Q670.5 48 673 50" stroke="#2040ff" stroke-width="2" fill="none"/><path d="M698 39.5L701 36.5L704 39.5" fill="none" stroke="#000"/><rect x="694" y="40" width="15" height="10.5" fill="#000"/><rect x="695" y="41" width="12.5" height="7.5" fill="#30c080"/><path d="M697 47.5L701.5 43L706 47.5" fill="none" stroke="#a00000" stroke-width="1.5"/><rect x="701" y="46" width="1.5" height="3" fill="#fff"/><path d="M694 50h15" stroke="#ffff80" stroke-dasharray="1 1.5"/><path d="M9.5 77.5L13.5 73.5H22.5L17.5 78.5L22.5 83.5H9.5Z" fill="none" stroke="#000080" stroke-width="1.2"/><rect x="12.5" y="72.5" width="3" height="3" fill="#e8e8f0" stroke="#000080" stroke-width="1"/><rect x="21.5" y="72.5" width="3" height="3" fill="#e8e8f0" stroke="#000080" stroke-width="1"/><rect x="8.5" y="76.5" width="3" height="3" fill="#e8e8f0" stroke="#000080" stroke-width="1"/><rect x="16.5" y="77.5" width="3" height="3" fill="#e8e8f0" stroke="#000080" stroke-width="1"/><rect x="8.5" y="82.5" width="3" height="3" fill="#e8e8f0" stroke="#000080" stroke-width="1"/><rect x="21.5" y="82.5" width="3" height="3" fill="#e8e8f0" stroke="#000080" stroke-width="1"/><path d="M46.5 70.5L49.5 75.5V79.5H43.5V75.5Z" fill="#ffff90" stroke="#000"/><path d="M46.5 72V77" stroke="#808000"/><rect x="44" y="80" width="5" height="4.5" fill="#000"/><path d="M63 74.5H70" stroke="#000080" stroke-width="1.3"/><circle cx="66" cy="74.5" r="1.5" fill="#000080"/><path d="M62.5 74.5L65.5 72.8V76.2Z" fill="#000080"/><path d="M72 74.5H75" stroke="#000080"/><path d="M62.5 80.5H64.5M66 80.5H73" stroke="#000080" stroke-width="1.3"/><path d="M70 80.5L73.5 78.5V82.5ZM73 80.5L76 78.5V82.5Z" fill="#000080"/><path d="M354 78L359.5 72.7L363.7 77.5L358.4 82.7Z" fill="#f4fff4" stroke="#000" stroke-width="1.1"/><path d="M356.5 75Q357 71 359 71.3Q360.5 71.8 360.5 73" fill="none" stroke="#000" stroke-width="1.1"/><path d="M359.5 73V78" stroke="#000080" stroke-width="1.2"/><path d="M362 75.5H364.5Q366 76 366 78V83.8H364V78L362.5 77Z" fill="#000080"/><rect x="587" y="74" width="10" height="9" fill="#000"/><rect x="585.5" y="72.5" width="9" height="8" fill="#ffffc0" stroke="#000"/></svg>
<span style="left:369px;top:177px;font-family:'Liberation Serif',serif;font-size:19px;-webkit-text-stroke:0.25px #000">Seat</span>
<span style="left:406px;top:177px;font-family:'Liberation Serif',serif;font-size:19px;-webkit-text-stroke:0.25px #000">Layout</span>
<span style="left:463.5px;top:177px;font-family:'Liberation Serif',serif;font-size:19px;-webkit-text-stroke:0.25px #000">in</span>
<span style="left:485px;top:177px;font-family:'Liberation Serif',serif;font-size:19px;-webkit-text-stroke:0.25px #000">New</span>
<span style="left:529.5px;top:177px;font-family:'Liberation Serif',serif;font-size:19px;-webkit-text-stroke:0.25px #000">ACL</span>
<span style="left:355px;top:268px;font-family:'Liberation Serif',serif;font-size:19px;-webkit-text-stroke:0.25px #000">Printer</span></body></html>
